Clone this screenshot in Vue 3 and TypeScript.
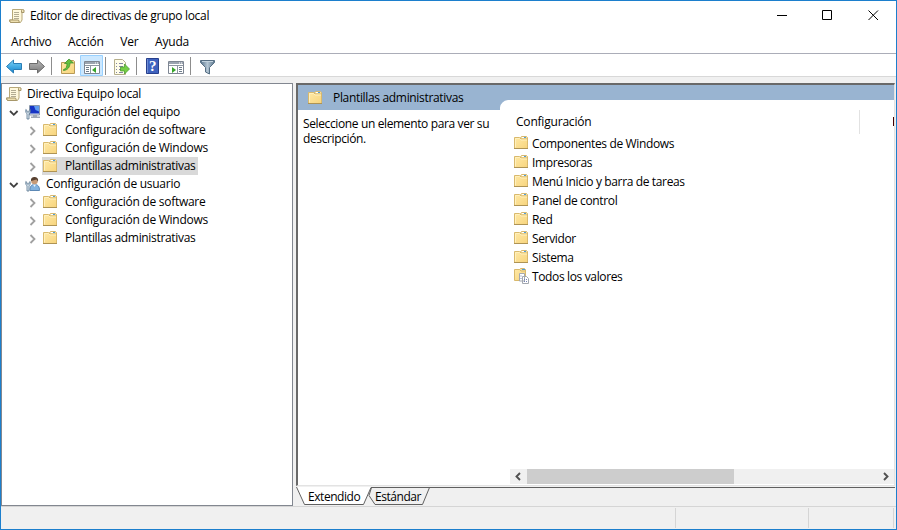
<script setup lang="ts">
import { h, type FunctionalComponent } from 'vue'

interface TreeItem {
  label: string
  level: 1 | 2
  icon: 'computer' | 'user' | 'folder'
  open?: boolean
  selected?: boolean
}

const menus: string[] = ['Archivo', 'Acción', 'Ver', 'Ayuda']

const tree: TreeItem[] = [
  { label: 'Configuración del equipo', level: 1, icon: 'computer', open: true },
  { label: 'Configuración de software', level: 2, icon: 'folder' },
  { label: 'Configuración de Windows', level: 2, icon: 'folder' },
  { label: 'Plantillas administrativas', level: 2, icon: 'folder', selected: true },
  { label: 'Configuración de usuario', level: 1, icon: 'user', open: true },
  { label: 'Configuración de software', level: 2, icon: 'folder' },
  { label: 'Configuración de Windows', level: 2, icon: 'folder' },
  { label: 'Plantillas administrativas', level: 2, icon: 'folder' },
]

const items: string[] = [
  'Componentes de Windows',
  'Impresoras',
  'Menú Inicio y barra de tareas',
  'Panel de control',
  'Red',
  'Servidor',
  'Sistema',
]

const svg = (children: ReturnType<typeof h>[]) =>
  h('svg', { viewBox: '0 0 16 16', width: 16, height: 16 }, children)
const p = (d: string, fill = 'none', stroke = 'none', w = 1) =>
  h('path', { d, fill, stroke, 'stroke-width': w })

const Folder: FunctionalComponent = () =>
  svg([
    p('M7.500 4V2.500l1-1h5l1 1V5z', '#f6dfa0', '#d6b76e'),
    p('M9 2h4v1H9z', '#fff'),
    p('M11 2h2v1h-2z', '#4c9ed8'),
    p('M1.500 2.500h5l1.500 1.500h6.500v9.500h-13z', 'url(#folder-fill)', '#d9b96c'),
    p('M1 13.500h14', 'none', '#ae9354'),
    p('M2.500 12.500v-9h4L8 5h6', 'none', '#fff0bd'),
  ])

const Scroll: FunctionalComponent = () =>
  svg([
    p('M3.500 1.500H13v10.500l-1.500 2.500h-10l-1-1v-1.500h3z', '#fff8dc', '#b7a878'),
    p('M12.500 4.500V2.500l1-1 1.500.500v2.500z', '#efe2b5', '#a7976a'),
    p('M5 4.500h5M5 6.500h5M5 8.500h5M5 10.500h5', 'none', '#b3ac92'),
    p('M.5 12h9l1 2.500h-9z', '#efe0b0', '#a7976a'),
  ])

const Computer: FunctionalComponent = () =>
  svg([
    p('M4.500 1.500h10v9.500h-10z', '#dfe4ec', '#8b98ad'),
    p('M5 2h9v7.500H5z', '#1734c4'),
    p('M9 2h5v5.500L10.500 6z', '#5f9cf0'),
    p('M8 11h4v2H8zM6 12.500h9V14H6z', '#a0a8b5'),
    p('M.8 5.500v3l1.200 1V15h2V9.500l1.200-1v-3L4 6.500v1.500H2V6.500z', '#e2edf5', '#58758e', 0.8),
  ])

const User: FunctionalComponent = () =>
  svg([
    p('M5 14.500c0-4 1-6 4.500-6s5 2 5 6z', '#83b3df', '#5c88b5'),
    p('M8 8.500 9.500 11l1.500-2.500z', '#e9f5ff'),
    h('circle', { cx: 9.5, cy: 5, r: 3.3, fill: '#c69a76' }),
    p('M6 5C5.500 2 7.500.8 10 1s3.500 2 3 4.500L11.500 3.500z', '#574131'),
    p('M.8 5.500v3l1.200 1V15h2V9.500l1.200-1v-3L4 6.500v1.500H2V6.500z', '#e2edf5', '#58758e', 0.8),
  ])

const AllValues: FunctionalComponent = () =>
  svg([
    p('M6.500 3V1.500l1-1h4l1 1V5z', '#f6dfa0', '#d6b76e'),
    p('M9 1h3v1H9z', '#4c9ed8'),
    p('M1.500 1.500h5L8 3h4.500v9.500h-11z', 'url(#folder-fill)', '#d9b96c'),
    p('M6.500 5.500h5V13h-5zM9.500 8.500h4l2 2v5h-6z', '#fff', '#a3a8b0'),
    p('M11 11.500h1m1 0h1m-3 2h1m1 0h1M7.500 8h1M7.500 10.500h1', 'none', '#7582b5'),
  ])
</script>

<template>
  <div class="window">
    <svg class="defs" width="0" height="0">
      <defs>
        <linearGradient id="folder-fill" x1="0" y1="0" x2="1" y2="1">
          <stop offset="0" stop-color="#ffe9a6" /><stop offset="1" stop-color="#f7d47d" />
        </linearGradient>
        <linearGradient id="blue-fill" x1="0" y1="0" x2="0" y2="1">
          <stop offset="0" stop-color="#7dd4f8" /><stop offset="1" stop-color="#1183cd" />
        </linearGradient>
        <linearGradient id="gray-fill" x1="0" y1="0" x2="0" y2="1">
          <stop offset="0" stop-color="#bbb" /><stop offset="1" stop-color="#777" />
        </linearGradient>
        <linearGradient id="funnel-fill">
          <stop offset="0" stop-color="#55718a" /><stop offset=".5" stop-color="#b4c6d4" /><stop offset="1" stop-color="#5a758c" />
        </linearGradient>
      </defs>
    </svg>

    <header class="titlebar">
      <Scroll />
      <span class="title">Editor de directivas de grupo local</span>
      <svg class="controls" width="110" height="30" viewBox="0 0 110 30" fill="none" stroke="#000">
        <path d="M0 14.500h10M45.500 9.500h9v9h-9z" />
        <path d="m91.500 9.500 9.500 9.500m0-9.500L91.500 19" />
      </svg>
    </header>

    <nav class="menubar">
      <span v-for="m in menus" :key="m">{{ m }}</span>
    </nav>

    <div class="toolbar">
      <svg width="220" height="22" viewBox="0 0 220 22" fill="none">
        <path d="M6.500 12.500 13.500 6v3.500h8v6h-8V19z" fill="url(#blue-fill)" stroke="#2a7db5" />
        <path d="M44.500 12.500 37.500 6v3.500h-8v6h8V19z" fill="url(#gray-fill)" stroke="#6b6b6b" />
        <path d="M51.500 3v18M105.500 3v18M136.500 3v18M190.500 3v18" stroke="#8d8d8d" />
        <path d="M61.500 8.500h5l1-2h6l1 1V19.500h-13z" fill="url(#folder-fill)" stroke="#b99a56" />
        <path d="M63.500 15.500c2.500-.5 3.500-2.500 3.500-6h-2.500L69 5l4.500 4H70c0 4-2 7-6.500 7.500z" fill="#62bf3e" stroke="#348c27" stroke-width=".7" />
        <path d="M80.500 1.500h22v20h-22z" fill="#cce8ff" stroke="#99d1ff" />
        <path d="M84.500 7.500h15v12h-15z" fill="#fff" stroke="#7e8693" />
        <path d="M85 8h14v2H85z" fill="#9ba4b0" />
        <path d="M95 9h1m1 0h1" stroke="#fff" />
        <path d="M85 11.500h14M90.500 12v7" stroke="#8e97a2" />
        <path d="M86 13.500h3m-3 2h3m-3 2h3" stroke="#6f7d8c" />
        <path d="m96 13-4 3 4 3z" fill="#36a329" />
        <path d="M114.500 5.500h8l3 3v12h-11z" fill="#fffde9" stroke="#b5ae8b" />
        <path d="M116 9.500h1m2 0h4m-7 3h1m2 0h4m-7 3h1m2 0h3m-6 3h1m2 0h4" stroke="#8485a5" />
        <path d="M120.500 13h4v-3l5 5-5 5v-3h-4z" fill="#76ce45" stroke="#42972b" stroke-width=".7" />
        <path d="M146.500 4.500h12v15h-12z" fill="#3f62be" stroke="#273f8d" />
        <path d="M147.500 5v14" stroke="#6f8dd2" />
        <path d="M168.500 7.500h15v12h-15z" fill="#fff" stroke="#7e8693" />
        <path d="M169 8h14v2h-14z" fill="#9ba4b0" />
        <path d="M179 9h1m1 0h1" stroke="#fff" />
        <path d="M169 11.500h14M177.500 12v7" stroke="#8e97a2" />
        <path d="M179 13.500h3m-3 2h3m-3 2h3" stroke="#6f7d8c" />
        <path d="m172 13 4 3-4 3z" fill="#36a329" />
        <path d="M200.500 6.500h14v2l-5 5V20l-4-2v-4.500l-5-5z" fill="url(#funnel-fill)" stroke="#566f84" />
        <path d="M202 7.500h11" stroke="#c3d3df" />
      </svg>
      <span class="help-mark">?</span>
    </div>

    <main class="workspace">
      <aside class="tree">
        <div class="root"><Scroll /><span>Directiva Equipo local</span></div>
        <div v-for="(t, i) in tree" :key="i" :class="['node', 'level-' + t.level]">
          <svg class="chevron" width="10" height="10" viewBox="0 0 10 10" fill="none" stroke-width="1.800">
            <path v-if="t.open" d="m1 3 3.800 3.800L8.600 3" stroke="#404040" />
            <path v-else d="m2.500 1 4 4-4 4" stroke="#a0a0a0" />
          </svg>
          <span :class="['entry', { selected: t.selected }]">
            <Computer v-if="t.icon === 'computer'" />
            <User v-else-if="t.icon === 'user'" />
            <Folder v-else />
            <span class="label">{{ t.label }}</span>
          </span>
        </div>
      </aside>

      <section class="details">
        <div class="pane">
          <div class="band"><Folder /><span>Plantillas administrativas</span></div>
          <div class="content">
            <p class="description">Seleccione un elemento para ver su<br />descripción.</p>
            <div class="list">
              <svg class="corner" width="8" height="10" viewBox="0 0 8 10"><path d="M0 10V7.500Q1 1 8 0H0z" fill="#99b4d1" /></svg>
              <div class="columns"><span>Configuración</span><i class="cut"></i></div>
              <div v-for="item in items" :key="item" class="row"><Folder /><span>{{ item }}</span></div>
              <div class="row"><AllValues /><span>Todos los valores</span></div>
              <div class="scrollbar">
                <svg width="17" height="15" viewBox="0 0 17 15" fill="none" stroke="#505050" stroke-width="1.900"><path d="m10 4-3.500 3.500L10 11" /></svg>
                <div class="thumb"></div>
                <svg class="arrow-right" width="17" height="15" viewBox="0 0 17 15" fill="none" stroke="#505050" stroke-width="1.900"><path d="m7 4 3.500 3.500L7 11" /></svg>
              </div>
            </div>
          </div>
        </div>
        <div class="tabs">
          <svg width="136" height="19" viewBox="0 0 136 19">
            <path d="M75.500.500h58l-7 17H79l-6-9z" fill="#f0f0f0" stroke="#606060" />
            <path d="M0 0h75l-7.500 17.500H8.500z" fill="#fff" />
            <path d="M.5 0l8 17.500h59L75 .500h600" fill="none" stroke="#606060" />
          </svg>
          <span class="tab-extended">Extendido</span>
          <span class="tab-standard">Estándar</span>
        </div>
      </section>
    </main>

    <footer class="statusbar"><span></span><span></span><span></span></footer>
  </div>
</template>

<style>
body {
  margin: 0;
  overflow: hidden;
}
</style>

<style scoped>
.window {
  box-sizing: border-box;
  width: 897px;
  height: 530px;
  border: 1px solid #1c7fcd;
  background: #f0f0f0;
  color: #000;
  font: 12px/18px "Open Sans", "Noto Sans", sans-serif;
  letter-spacing: -0.3px;
  white-space: nowrap;
  display: flex;
  flex-direction: column;
}
.window svg {
  flex: none;
  display: block;
}
.defs {
  position: absolute;
}
.titlebar {
  height: 30px;
  background: #fff;
  display: flex;
  align-items: center;
  padding-left: 8px;
}
.title {
  margin-left: 5px;
}
.controls {
  margin-left: auto;
  margin-right: 9px;
}
.menubar {
  height: 22px;
  background: #fff;
  border-bottom: 1px solid #abadb8;
  display: flex;
  align-items: center;
  gap: 16.500px;
  padding-left: 10px;
  letter-spacing: -0.18px;
}
.toolbar {
  height: 22px;
  background: #fff;
  border-bottom: 1px solid #d8d8d8;
  position: relative;
}
.toolbar > svg {
  margin-left: -1px;
}
.help-mark {
  position: absolute;
  left: 148px;
  top: 3px;
  color: #fff;
  font: bold 15px/18px "Liberation Serif", serif;
}
.workspace {
  height: 430px;
  box-sizing: border-box;
  padding-top: 6px;
  border-bottom: 1px solid #d5d5d5;
  display: flex;
}
.tree {
  box-sizing: border-box;
  width: 292px;
  height: 423px;
  border: 1px solid #828790;
  background: #fff;
  padding-top: 1px;
  letter-spacing: -0.27px;
}
.root,
.node,
.entry {
  display: flex;
  align-items: center;
  height: 18px;
}
.root {
  padding-left: 4px;
  gap: 5px;
}
.node.level-1 {
  padding-left: 7px;
}
.node.level-2 {
  padding-left: 26px;
}
.level-1 .entry {
  margin-left: 6px;
}
.level-2 .entry {
  margin-left: 4px;
}
.label {
  margin-left: 5px;
}
.level-2 .label {
  margin-left: 7px;
}
.entry.selected {
  background: #d9d9d9;
  padding-right: 3px;
  letter-spacing: -0.33px;
}
.node:last-child {
  letter-spacing: -0.33px;
}
.chevron {
  margin-top: 2px;
}
.details {
  width: 599px;
  flex: none;
  margin-left: 3px;
}
.pane {
  box-sizing: border-box;
  height: 403px;
  border: 2px solid;
  border-color: #696969 #e3e3e3 #e3e3e3 #696969;
  border-right-width: 1px;
  border-bottom-width: 1px;
  background: #fff;
}
.band {
  height: 25px;
  background: #99b4d1;
  display: flex;
  align-items: center;
  padding-left: 9px;
  gap: 10px;
  letter-spacing: -0.33px;
}
.content {
  display: flex;
  height: 375px;
}
.description {
  box-sizing: border-box;
  width: 202px;
  margin: 0;
  padding: 6px 0 0 5px;
  line-height: 15px;
  letter-spacing: -0.37px;
}
.list {
  position: relative;
  box-sizing: border-box;
  flex: 1;
  height: 385px;
  margin-top: -10px;
  padding-bottom: 1px;
  background: #fff;
  display: flex;
  flex-direction: column;
  letter-spacing: -0.36px;
}
.corner {
  position: absolute;
  left: 0;
  top: 0;
}
.columns {
  height: 24px;
  margin: 10px 0 0 16px;
  display: flex;
  align-items: center;
  width: 343px;
  border-right: 1px solid #e2e2e2;
  letter-spacing: -0.2px;
}
.cut {
  position: absolute;
  right: 0;
  top: 17px;
  width: 1px;
  height: 9px;
  background: #400;
}
.row {
  display: flex;
  align-items: center;
  height: 19px;
  padding-left: 13px;
  gap: 3px;
}
.row > svg {
  margin-top: -1px;
}
.scrollbar {
  height: 15px;
  margin-top: auto;
  margin-left: 10px;
  background: #f0f0f0;
  display: flex;
}
.thumb {
  width: 207px;
  background: #cdcdcd;
}
.arrow-right {
  margin-left: auto;
}
.tabs {
  position: relative;
  height: 19px;
  margin-top: 1px;
  letter-spacing: -0.45px;
}
.tabs::before {
  content: "";
  position: absolute;
  left: 76px;
  right: 0;
  top: 0;
  border-top: 1px solid #606060;
}
.tab-extended,
.tab-standard {
  position: absolute;
  top: 1px;
}
.tab-extended {
  left: 12px;
}
.tab-standard {
  left: 79px;
}
.statusbar {
  height: 22px;
  display: flex;
  padding: 1px 0;
  box-sizing: border-box;
}
.statusbar span {
  box-sizing: border-box;
  border-right: 1px solid #d5d5d5;
}
.statusbar span:nth-child(1) {
  width: 675px;
}
.statusbar span:nth-child(2) {
  width: 133px;
}
.statusbar span:nth-child(3) {
  width: 85px;
}
</style>
